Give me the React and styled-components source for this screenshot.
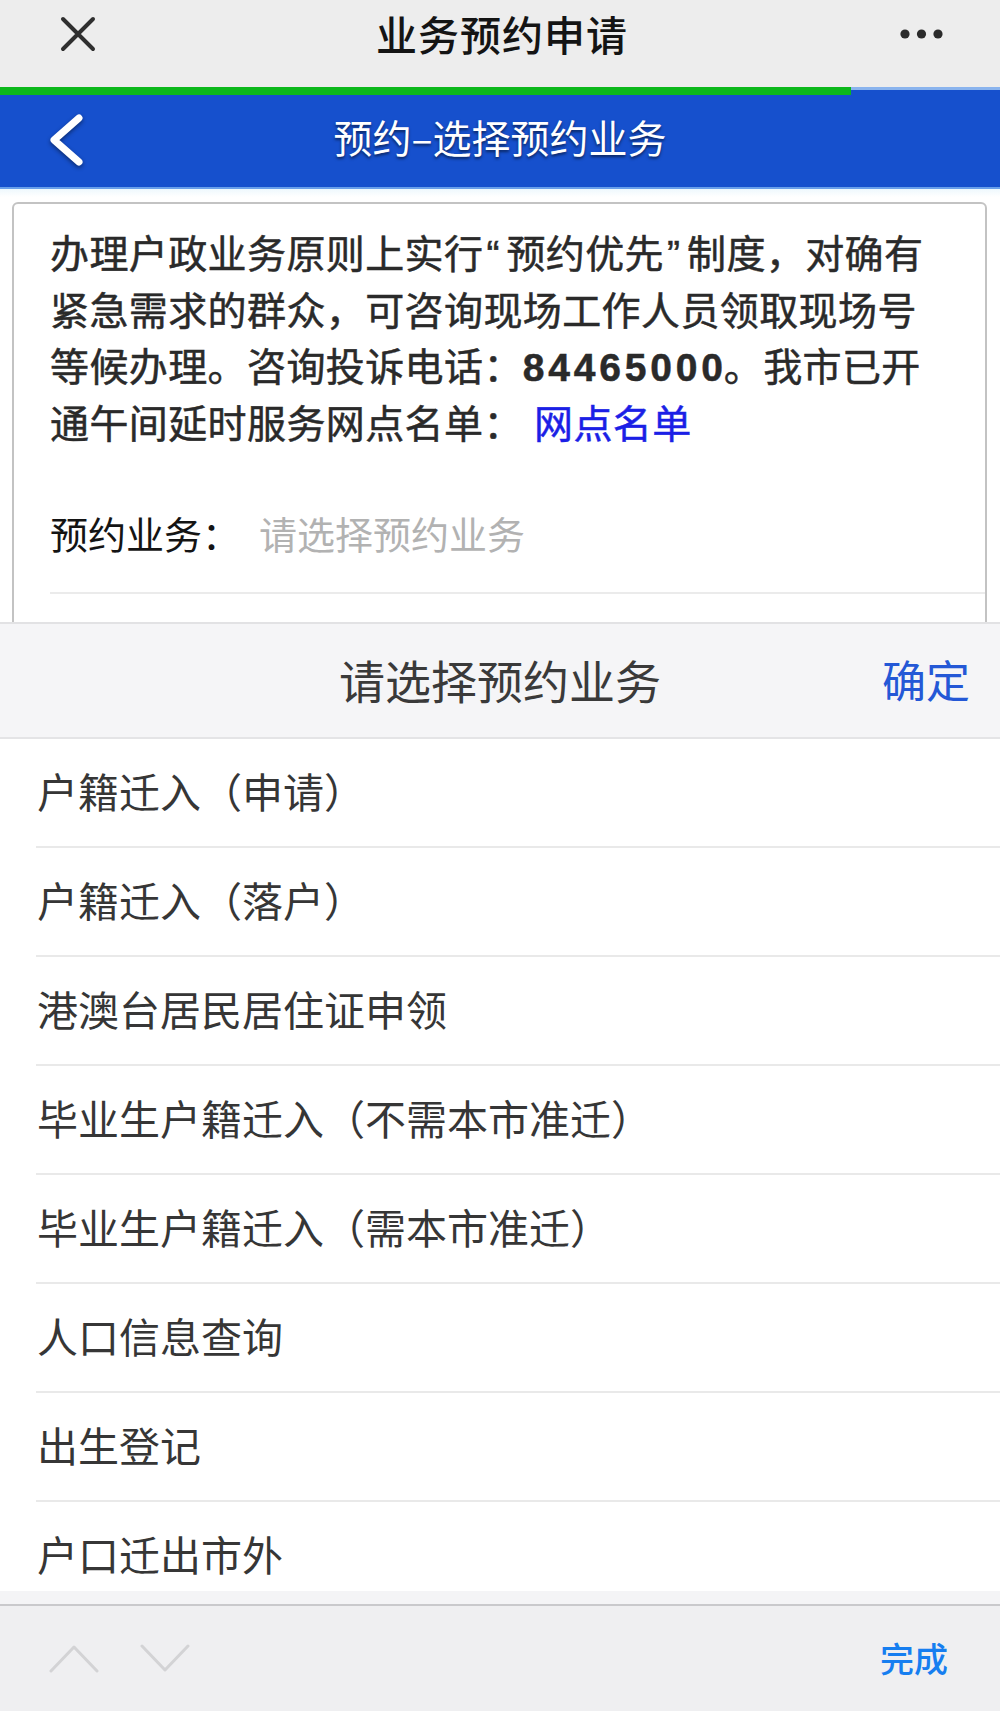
import React from "react";
import styled, { createGlobalStyle } from "styled-components";

const Global = createGlobalStyle`
  html, body { margin: 0; padding: 0; background: #ffffff; }
  body { font-family: "Noto Sans CJK SC", "Noto Sans", sans-serif; }
  #root { width: 1000px; height: 1711px; overflow: hidden; }
`;

const Screen = styled.div`
  width: 1000px;
  height: 1711px;
  display: flex;
  flex-direction: column;
  background: #ffffff;
  overflow: hidden;
`;

const NavBar = styled.header`
  height: 87px;
  box-sizing: border-box;
  padding: 0 50px 20px 60px;
  background: #ededed;
  display: grid;
  grid-template-columns: 120px 1fr 120px;
  align-items: center;
  flex-shrink: 0;
`;

const NavTitle = styled.h1`
  margin: 0;
  text-align: center;
  font-size: 41px;
  font-weight: 500;
  color: #141414;
  letter-spacing: 1px;
  line-height: 1;
  padding-right: 6px;
`;

const NavRight = styled.div`
  display: flex;
  justify-content: flex-end;
  padding-right: 6px;
`;

const BlueBar = styled.div`
  position: relative;
  height: 102px;
  box-sizing: border-box;
  background: #1650cd;
  border-top: 3px solid #8ab4ee;
  border-bottom: 2px solid #6aa0ea;
  display: grid;
  grid-template-columns: 120px 1fr 120px;
  align-items: center;
  padding-bottom: 4px;
  flex-shrink: 0;
`;

const Progress = styled.div`
  position: absolute;
  left: 0;
  top: -3px;
  height: 8px;
  background: #0cb81c;
`;

const BackBtn = styled.div`
  padding-left: 46px;
  display: flex;
  align-items: center;
  padding-top: 6px;
`;

const BarTitle = styled.div`
  text-align: center;
  color: #ffffff;
  font-size: 39px;
  font-weight: 400;
  line-height: 1;
  text-shadow: 0 2px 3px rgba(0, 0, 0, 0.55);
`;

const PageArea = styled.div`
  height: 433px;
  flex-shrink: 0;
  overflow: hidden;
  padding: 13px 13px 0 12px;
  box-sizing: border-box;
  background: linear-gradient(#eef8fd 0px, #ffffff 8px);
`;

const Card = styled.section`
  border: 2.5px solid #c3c3c3;
  border-radius: 6px;
  box-sizing: border-box;
  height: 480px;
  padding: 23px 0 0 36px;
  background: #ffffff;
`;

const Notice = styled.p`
  margin: 0;
  font-family: "Liberation Sans", "Noto Sans CJK SC", sans-serif;
  font-size: 39px;
  font-weight: 400;
  line-height: 56.7px;
  letter-spacing: 0.4px;
  color: #2a2a2a;
  white-space: nowrap;
  -webkit-text-stroke: 0.5px #2a2a2a;
`;

const Quote = styled.span`
  letter-spacing: 7px;
  margin-left: 3px;
`;

const Phone = styled.b`
  font-family: "Liberation Sans", sans-serif;
  font-weight: 700;
  letter-spacing: 3.8px;
  margin-right: -3px;
`;

const Link = styled.a`
  color: #1b1fe6;
  text-decoration: none;
  -webkit-text-stroke: 0.5px #1b1fe6;
`;

const FormRow = styled.div`
  margin-top: 24px;
  height: 116px;
  box-sizing: border-box;
  border-bottom: 2px solid #ebebeb;
  display: flex;
  align-items: center;
  gap: 19px;
  padding-bottom: 4px;
`;

const Label = styled.span`
  font-size: 38px;
  color: #141414;
`;

const Placeholder = styled.span`
  font-size: 38px;
  color: #b2b2b2;
`;

const Picker = styled.div`
  height: 982px;
  flex-shrink: 0;
  display: flex;
  flex-direction: column;
  background: #f4f4f6;
  border-top: 2px solid #e2e2e4;
  box-sizing: border-box;
`;

const PickerHeader = styled.div`
  height: 115px;
  flex-shrink: 0;
  box-sizing: border-box;
  border-bottom: 2px solid #e4e4e6;
  background: #f5f5f7;
  display: grid;
  grid-template-columns: 160px 1fr 160px;
  align-items: center;
  padding-bottom: 4px;
`;

const PickerTitle = styled.div`
  text-align: center;
  font-size: 46px;
  color: #3a3a3a;
  line-height: 1;
`;

const Confirm = styled.button`
  justify-self: end;
  margin-right: 30px;
  border: none;
  background: none;
  padding: 0;
  font-family: inherit;
  font-size: 44px;
  color: #2458d6;
  line-height: 1;
`;

const List = styled.ul`
  list-style: none;
  margin: 0;
  padding: 0;
  height: 852px;
  flex-shrink: 0;
  overflow: hidden;
  background: #ffffff;
`;

const Item = styled.li`
  height: 109px;
  box-sizing: border-box;
  margin-left: 36px;
  border-bottom: 2px solid #e9e9e9;
  display: flex;
  align-items: center;
  padding-left: 1px;
  padding-bottom: 5px;
  font-size: 41px;
  color: #363636;
`;

const Toolbar = styled.div`
  flex: 1;
  border-top: 2px solid #c9c9cc;
  background: #efeff1;
  display: flex;
  align-items: center;
  padding: 0 52px 0 49px;
  box-sizing: border-box;
  gap: 41px;
`;

const Done = styled.span`
  margin-left: auto;
  font-size: 34px;
  font-weight: 500;
  color: #167ef0;
  padding-bottom: 2px;
`;

const ChevronIcon = ({ up }) => (
  <svg width="50" height="29" viewBox="0 0 50 29">
    <polyline
      points={up ? "2,27 25,3 48,27" : "2,2 25,26 48,2"}
      fill="none"
      stroke="#d3d3d5"
      strokeWidth="3"
      strokeLinecap="round"
      strokeLinejoin="round"
    />
  </svg>
);

const items = [
  "户籍迁入（申请）",
  "户籍迁入（落户）",
  "港澳台居民居住证申领",
  "毕业生户籍迁入（不需本市准迁）",
  "毕业生户籍迁入（需本市准迁）",
  "人口信息查询",
  "出生登记",
  "户口迁出市外",
];

export default function App() {
  return (
    <>
      <Global />
      <Screen>
        <NavBar>
          <svg width="36" height="36" viewBox="0 0 36 36">
            <path d="M3 3 L33 33 M33 3 L3 33" stroke="#2f2f2f" strokeWidth="4" strokeLinecap="round" />
          </svg>
          <NavTitle>业务预约申请</NavTitle>
          <NavRight>
            <svg width="44" height="12" viewBox="0 0 44 12">
              <circle cx="5" cy="6" r="4.6" fill="#2b2b2b" />
              <circle cx="21.5" cy="6" r="4.6" fill="#2b2b2b" />
              <circle cx="38" cy="6" r="4.6" fill="#2b2b2b" />
            </svg>
          </NavRight>
        </NavBar>

        <BlueBar>
          <Progress style={{ width: "851px" }} />
          <BackBtn>
            <svg width="40" height="52" viewBox="0 0 40 52" style={{ filter: "drop-shadow(0 2px 2px rgba(0,0,0,0.45))" }}>
              <polyline points="33,4 8,26 33,48" fill="none" stroke="#ffffff" strokeWidth="7" strokeLinecap="round" strokeLinejoin="round" />
            </svg>
          </BackBtn>
          <BarTitle>预约–选择预约业务</BarTitle>
          <div />
        </BlueBar>

        <PageArea>
          <Card>
            <Notice>
              办理户政业务原则上实行<Quote>“</Quote>预约优先<Quote>”</Quote>制度，对确有
              <br />
              紧急需求的群众，可咨询现场工作人员领取现场号
              <br />
              等候办理。咨询投诉电话：<Phone>84465000</Phone>。我市已开
              <br />
              通午间延时服务网点名单： <Link href="#">网点名单</Link>
            </Notice>
            <FormRow>
              <Label>预约业务：</Label>
              <Placeholder>请选择预约业务</Placeholder>
            </FormRow>
          </Card>
        </PageArea>

        <Picker>
          <PickerHeader>
            <div />
            <PickerTitle>请选择预约业务</PickerTitle>
            <Confirm>确定</Confirm>
          </PickerHeader>
          <List>
            {items.map((t) => (
              <Item key={t}>{t}</Item>
            ))}
          </List>
        </Picker>

        <Toolbar>
          <ChevronIcon up />
          <ChevronIcon />
          <Done>完成</Done>
        </Toolbar>
      </Screen>
    </>
  );
}
